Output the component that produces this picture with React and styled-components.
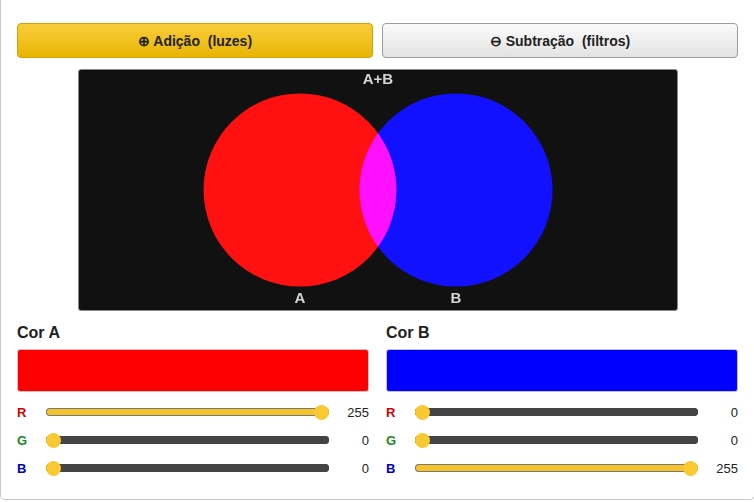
import React, { useState } from 'react'
import styled, { createGlobalStyle } from 'styled-components'

const GlobalStyle = createGlobalStyle`
  html, body {
    margin: 0;
    padding: 0;
    background: #fff;
    overflow: hidden;
  }
  body {
    font-family: "Liberation Sans", Arial, sans-serif;
    color: #222;
  }
`

const Card = styled.div`
  box-sizing: border-box;
  width: 755px;
  padding: 23px 16px 17px 16px;
  border: 1px solid #c8c8c8;
  border-top: none;
  border-radius: 0 0 5px 5px;
  background: #fff;
`

const ModeBar = styled.div`
  display: grid;
  grid-template-columns: 1fr 1fr;
  gap: 9px;
`

const ModeButton = styled.button`
  height: 35px;
  border-radius: 4px;
  font-family: inherit;
  font-size: 14px;
  font-weight: bold;
  color: #222;
  cursor: pointer;
  border: 1px solid ${p => (p.$active ? '#cfa004' : '#9c9c9c')};
  background: ${p =>
    p.$active
      ? 'linear-gradient(to bottom, #f9cd3a, #e8b504)'
      : 'linear-gradient(to bottom, #fbfbfb, #e3e3e3)'};
  white-space: pre;
`

const Stage = styled.div`
  width: 600px;
  height: 242px;
  box-sizing: border-box;
  margin: 11px auto 0;
  background: #111;
  border: 1px solid #8a8a8a;
  border-radius: 3px;
  overflow: hidden;
  isolation: isolate;

  svg {
    display: block;
  }
`

const Columns = styled.div`
  display: grid;
  grid-template-columns: 1fr 1fr;
  gap: 17px;
  margin-top: 12px;
`

const Heading = styled.h3`
  margin: 0 0 6px;
  font-size: 16px;
  line-height: 20px;
  font-weight: bold;
  color: #222;
`

const Swatch = styled.div`
  height: 43px;
  box-sizing: border-box;
  border: 1px solid #c4c4c4;
  border-radius: 3px;
  margin-bottom: 6px;
`

const Row = styled.div`
  display: grid;
  grid-template-columns: 29px 1fr 40px;
  align-items: center;
  height: 28px;
`

const ChannelLabel = styled.span`
  font-size: 13px;
  font-weight: bold;
  color: ${p => p.$color};
`

const Range = styled.input`
  -webkit-appearance: none;
  appearance: none;
  margin: 0;
  width: 100%;
  height: 8px;
  border-radius: 4px;
  border: none;
  outline: none;
  box-shadow: inset 0 0 0 1px ${p => p.$edge};

  &::-webkit-slider-thumb {
    -webkit-appearance: none;
    width: 15px;
    height: 15px;
    border-radius: 50%;
    background: #f9c933;
    border: none;
    cursor: pointer;
  }
`

const Value = styled.span`
  font-size: 13px;
  text-align: right;
  color: #222;
`

const channels = [
  { key: 'r', label: 'R', color: '#d40000' },
  { key: 'g', label: 'G', color: '#1c8a1c' },
  { key: 'b', label: 'B', color: '#0000b4' }
]

const ColorPanel = ({ title, value, onChange }) => (
  <div>
    <Heading>{title}</Heading>
    <Swatch style={{ background: `rgb(${value.r}, ${value.g}, ${value.b})` }} />
    {channels.map(c => {
      const pct = (value[c.key] / 255) * 100
      return (
        <Row key={c.key}>
          <ChannelLabel $color={c.color}>{c.label}</ChannelLabel>
          <Range
            type='range'
            min='0'
            max='255'
            value={value[c.key]}
            $edge={pct > 0 ? '#7a7a7a' : '#444'}
            onChange={e => onChange({ ...value, [c.key]: Number(e.target.value) })}
            style={{ background: `linear-gradient(to right, #f5c42c ${pct}%, #444 ${pct}%)` }}
          />
          <Value>{value[c.key]}</Value>
        </Row>
      )
    })}
  </div>
)

const rgb = c => `rgb(${c.r}, ${c.g}, ${c.b})`

const App = () => {
  const [mode, setMode] = useState('add')
  const [colorA, setColorA] = useState({ r: 255, g: 0, b: 0 })
  const [colorB, setColorB] = useState({ r: 0, g: 0, b: 255 })

  const blend = mode === 'add' ? 'screen' : 'multiply'

  return (
    <>
      <GlobalStyle />
      <Card>
        <ModeBar>
          <ModeButton $active={mode === 'add'} onClick={() => setMode('add')}>
            {'⊕ Adição  (luzes)'}
          </ModeButton>
          <ModeButton $active={mode === 'sub'} onClick={() => setMode('sub')}>
            {'⊖ Subtração  (filtros)'}
          </ModeButton>
        </ModeBar>

        <Stage>
          <svg width='598' height='240' viewBox='0 0 598 240'>
            <circle cx='221' cy='120' r='96.5' fill={rgb(colorA)} style={{ mixBlendMode: blend }} />
            <circle cx='377' cy='120' r='96.5' fill={rgb(colorB)} style={{ mixBlendMode: blend }} />
            <g fill='#d6d6d6' fontFamily='Liberation Sans, Arial, sans-serif' fontWeight='bold' fontSize='15' textAnchor='middle'>
              <text x='299' y='14'>A+B</text>
              <text x='221' y='233'>A</text>
              <text x='377' y='233'>B</text>
            </g>
          </svg>
        </Stage>

        <Columns>
          <ColorPanel title='Cor A' value={colorA} onChange={setColorA} />
          <ColorPanel title='Cor B' value={colorB} onChange={setColorB} />
        </Columns>
      </Card>
    </>
  )
}

export default App
